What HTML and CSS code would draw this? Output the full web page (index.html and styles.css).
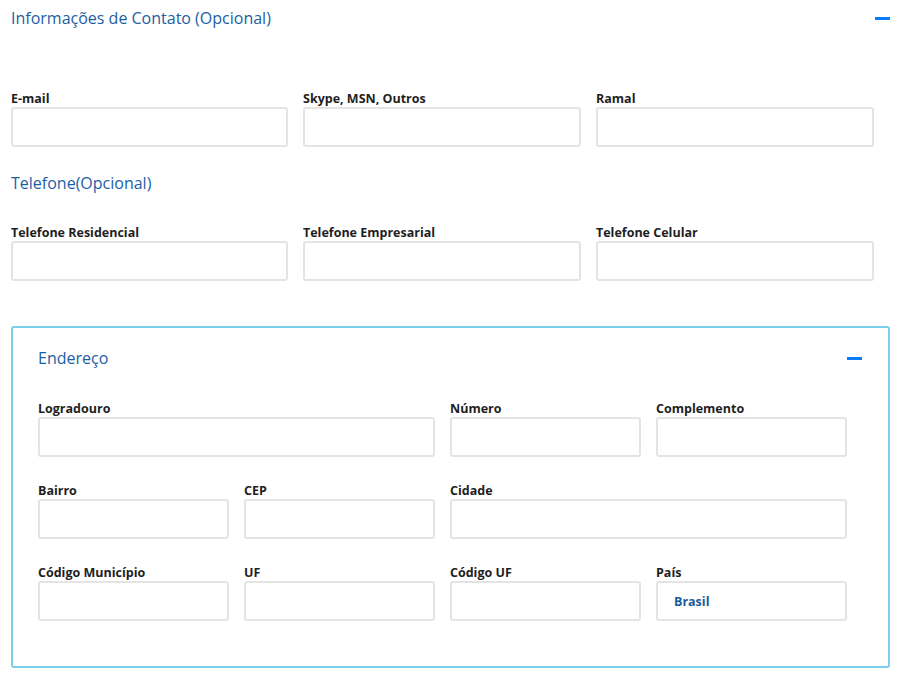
FILE: index.html
```html
<!DOCTYPE html>
<html lang="pt-BR">
<head>
<meta charset="utf-8">
<title>Informações de Contato</title>
<link rel="stylesheet" href="styles.css">
</head>
<body>
<div class="page">
  <div class="section-head top-head">
    <h2 class="heading">Informações de Contato (Opcional)</h2>
    <span class="minus"></span>
  </div>

  <div class="grid3 first-grid">
    <div class="field"><label class="label">E-mail</label><input class="input" type="text"></div>
    <div class="field"><label class="label">Skype, MSN, Outros</label><input class="input" type="text"></div>
    <div class="field"><label class="label">Ramal</label><input class="input" type="text"></div>
  </div>

  <h3 class="heading sub">Telefone(Opcional)</h3>

  <div class="grid3 second-grid">
    <div class="field"><label class="label">Telefone Residencial</label><input class="input" type="text"></div>
    <div class="field"><label class="label">Telefone Empresarial</label><input class="input" type="text"></div>
    <div class="field"><label class="label">Telefone Celular</label><input class="input" type="text"></div>
  </div>

  <div class="box">
    <div class="section-head box-head">
      <h3 class="heading">Endereço</h3>
      <span class="minus"></span>
    </div>
    <div class="grid4">
      <div class="field span2"><label class="label">Logradouro</label><input class="input" type="text"></div>
      <div class="field"><label class="label">Número</label><input class="input" type="text"></div>
      <div class="field"><label class="label">Complemento</label><input class="input" type="text"></div>

      <div class="field"><label class="label">Bairro</label><input class="input" type="text"></div>
      <div class="field"><label class="label">CEP</label><input class="input" type="text"></div>
      <div class="field span2"><label class="label">Cidade</label><input class="input" type="text"></div>

      <div class="field"><label class="label">Código Município</label><input class="input" type="text"></div>
      <div class="field"><label class="label">UF</label><input class="input" type="text"></div>
      <div class="field"><label class="label">Código UF</label><input class="input" type="text"></div>
      <div class="field"><label class="label">País</label><input class="input value" type="text" value="Brasil"></div>
    </div>
  </div>
</div>
</body>
</html>
```

FILE: styles.css
```css
* { box-sizing: border-box; }

html, body {
  margin: 0;
  padding: 0;
  background: #ffffff;
  font-family: "Open Sans", "Noto Sans", sans-serif;
}

.page {
  width: 879px;
  margin-left: 11px;
  padding-top: 7px;
  padding-bottom: 10px;
}

.section-head {
  display: flex;
  justify-content: space-between;
  align-items: center;
}

.heading {
  margin: 0;
  font-size: 16px;
  line-height: 22px;
  font-weight: 400;
  color: #1b5ea5;
}

.minus {
  display: block;
  width: 15px;
  height: 3px;
  background: #0a7cff;
  margin-top: 1px;
}

.grid3 {
  display: grid;
  grid-template-columns: 277px 278px 278px;
  column-gap: 15px;
}

.first-grid { margin-top: 61px; }

.sub { margin-top: 25px; }

.second-grid { margin-top: 30px; }

.field {
  display: flex;
  flex-direction: column;
  min-width: 0;
}

.label {
  font-size: 12.5px;
  line-height: 17px;
  font-weight: 700;
  color: #1e1e1e;
}

.input {
  display: block;
  width: 100%;
  height: 40px;
  margin: 0;
  border: 2px solid #e4e4e4;
  border-radius: 3px;
  background: #ffffff;
  padding: 0 16px;
  font-family: "Open Sans", "Noto Sans", sans-serif;
  font-size: 12.5px;
  font-weight: 700;
  color: #1b5a98;
  outline: none;
}

.box {
  margin-top: 45px;
  border: 2px solid #7ccfe8;
  border-radius: 3px;
  padding: 19px 41px 45px 25px;
}

.box-head {
  margin-right: -15px;
}

.grid4 {
  display: grid;
  grid-template-columns: repeat(4, 1fr);
  column-gap: 15px;
  row-gap: 25px;
  margin-top: 31px;
}

.span2 { grid-column: span 2; }
```
